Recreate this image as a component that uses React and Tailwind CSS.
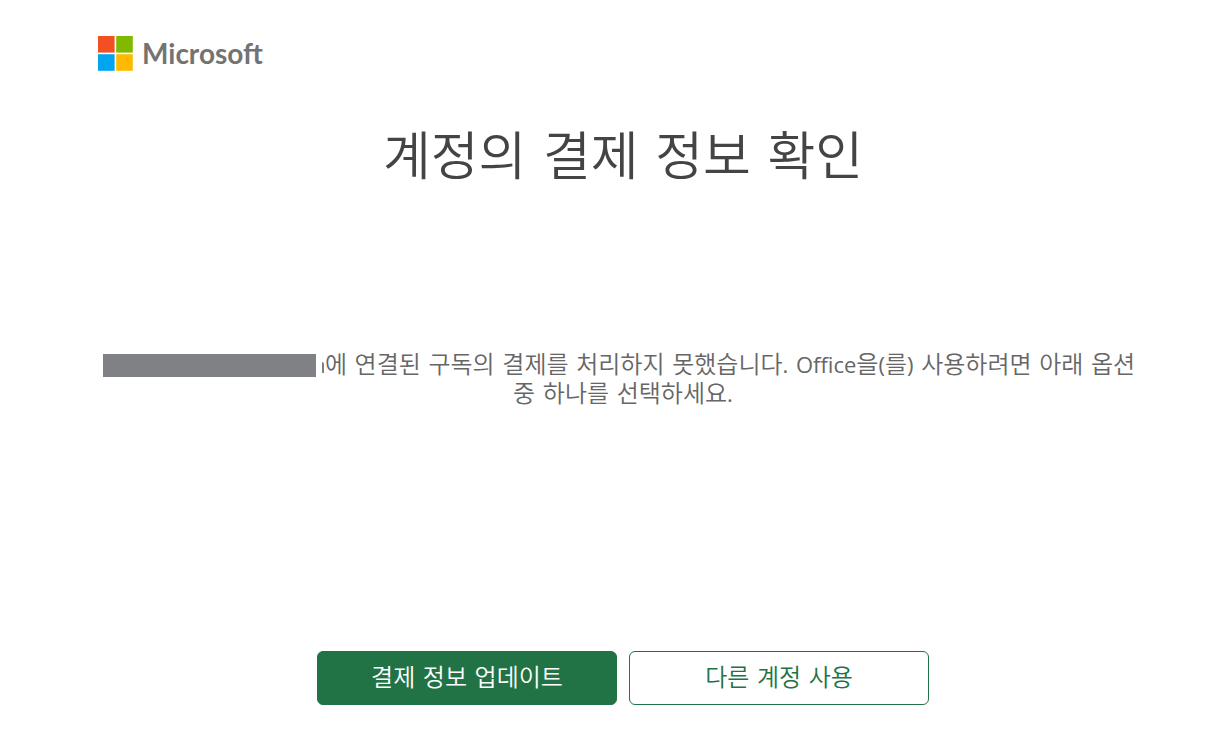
function MicrosoftLogo() {
  return (
    <div className="flex h-[35px] items-center gap-[9px]">
      <svg className="h-[35px] w-[35px] shrink-0" viewBox="0 0 35 35" aria-hidden="true">
        <path fill="#f25022" d="M0 0h16.6v16.6H0z" />
        <path fill="#7fba00" d="M18.2 0h16.6v16.6H18.2z" />
        <path fill="#00a4ef" d="M0 18.2h16.6v16.6H0z" />
        <path fill="#ffb900" d="M18.2 18.2h16.6v16.6H18.2z" />
      </svg>
      <span className="font-['Lato','Open_Sans',sans-serif] text-[28px] leading-[35px] font-bold text-[#737373]">
        Microsoft
      </span>
    </div>
  );
}

function Latin({ children }) {
  return (
    <span className="font-['Open_Sans',sans-serif] text-[22px] leading-none font-normal">{children}</span>
  );
}

export default function App() {
  return (
    <main className="min-h-screen bg-white pt-9 pr-20 pb-11 pl-[98px] font-['DejaVu_Sans','Noto_Sans_CJK_KR',sans-serif] font-[350]">
      <header>
        <MicrosoftLogo />
      </header>

      <h1 className="mt-[51px] text-center text-[52px] leading-[70px] font-[350] text-[#444444]">
        계정의 결제 정보 확인
      </h1>

      <p className="mt-[159px] text-center text-2xl leading-[29px] text-[#666666]">
        <span className="mr-[6px] -ml-2 inline-block h-[23px] w-[213px] bg-[#808184] align-[-4px]" />
        <span className="mr-px inline-block h-[11px] w-[2px] rounded-tr-xs bg-[#808080]" />
        에 연결된 구독의 결제를 처리하지 못했습니다<Latin>.</Latin> <Latin>Office</Latin>을<Latin>(</Latin>를
        <Latin>)</Latin> 사용하려면 아래 옵션 중 하나를 선택하세요<Latin>.</Latin>
      </p>

      <div className="mt-[242px] flex justify-center gap-3 text-2xl">
        <button
          type="button"
          className="h-[54px] w-[300px] rounded-md border border-[#217346] bg-[#217346] text-white"
        >
          결제 정보 업데이트
        </button>
        <button
          type="button"
          className="h-[54px] w-[300px] rounded-md border border-[#217346] bg-white text-[#217346]"
        >
          다른 계정 사용
        </button>
      </div>
    </main>
  );
}
